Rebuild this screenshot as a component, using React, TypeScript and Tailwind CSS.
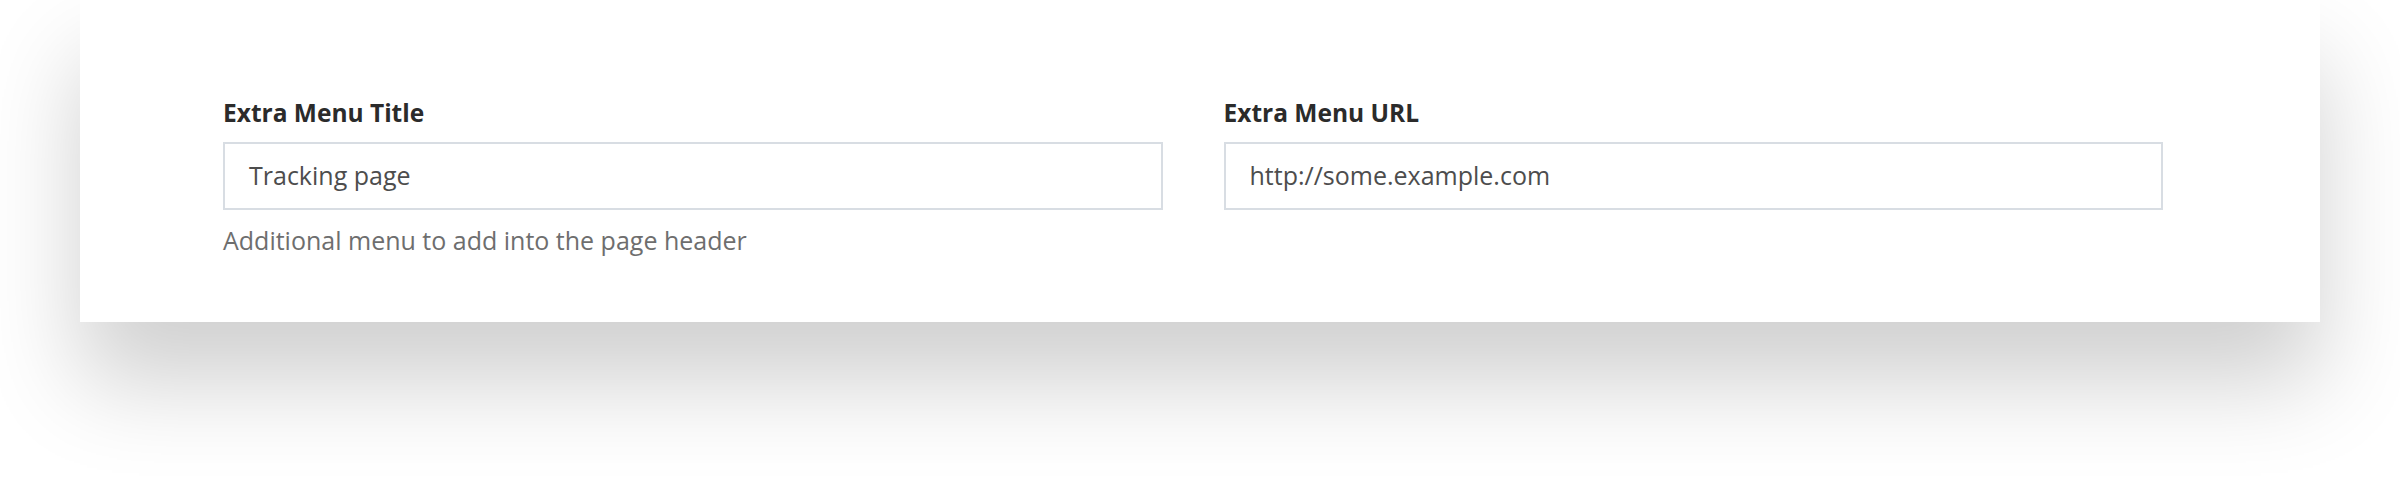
export default function App() {
  const font = { fontFamily: '"Open Sans", "Lato", sans-serif' };
  return (
    <div className="h-[482px] w-[2400px] overflow-hidden bg-white" style={font}>
      <div className="ml-[80px] h-[322px] w-[2240px] bg-white pl-[143px] pr-[157px] pt-[98px] shadow-[0_60px_90px_rgba(0,0,0,0.19)]">
        <div className="grid grid-cols-2 gap-x-[61px]">
          <div>
            <label className="block h-[30px] text-[24.5px] leading-[30px] font-bold text-[#2b2b2b]">
              Extra Menu Title
            </label>
            <div className="mt-[14px] flex h-[68px] items-center border-2 border-[#d8dde3] px-[24px] text-[25px] text-[#4d4d4d]">
              Tracking page
            </div>
            <p className="mt-[15px] text-[25px] leading-[30px] text-[#6e6e6e]">
              Additional menu to add into the page header
            </p>
          </div>
          <div>
            <label className="block h-[30px] text-[24.5px] leading-[30px] font-bold text-[#2b2b2b]">
              Extra Menu URL
            </label>
            <div className="mt-[14px] flex h-[68px] items-center border-2 border-[#d8dde3] px-[24px] text-[25px] text-[#4d4d4d]">
              http://some.example.com
            </div>
          </div>
        </div>
      </div>
    </div>
  );
}
